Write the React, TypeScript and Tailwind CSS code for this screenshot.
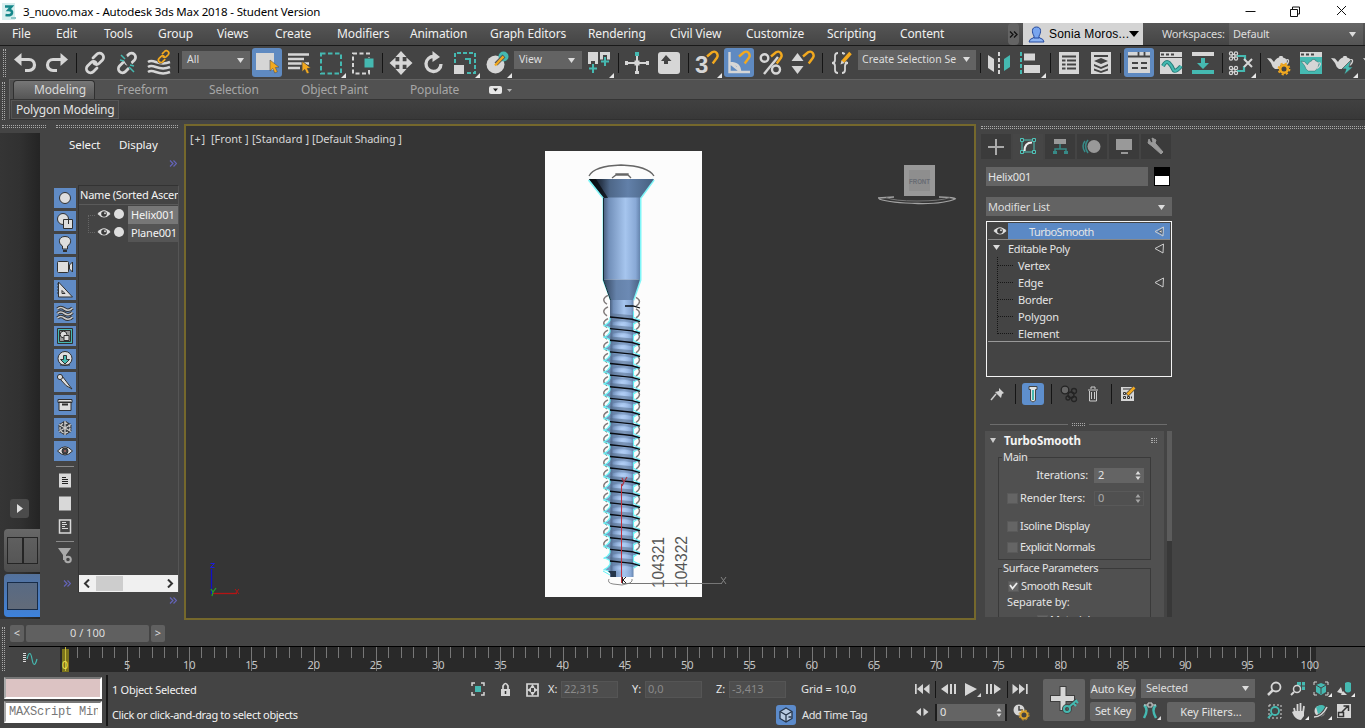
import React from "react";

type Kids = { children?: React.ReactNode };
const L = "#d6d6d6";
const T = "#45b9b1";
const Y = "#f2a91f";

const Ico = ({ s = 32, children, className = "" }: Kids & { s?: number; className?: string }) => (
  <svg width={s} height={s} viewBox={`0 0 ${s} ${s}`} fill="none" className={`block shrink-0 ${className}`}>
    {children}
  </svg>
);

const gripV = "w-[3px] shrink-0 border-x border-dotted border-[#a8a8a8]";
const gripH = "h-[3px] shrink-0 border-y border-dotted border-[#a8a8a8]";

const Fly = () => <path d="M31 26v5h-5z" fill="#e6e6e6" />;
const Sep = ({ className = "w-1.5" }: { className?: string }) => (
  <div className={`flex shrink-0 justify-center ${className}`}>
    <div className="h-5 w-px bg-[#151515]" />
  </div>
);
const Tool = ({ active, children }: Kids & { active?: boolean }) => (
  <div className="flex h-8 w-8 shrink-0 items-center justify-center">
    <div className={active ? "h-[29px] w-[30px] overflow-hidden rounded-[3px] bg-[#5f8ac1]" : "h-8 w-8"}>
      <Ico className={active ? "-ml-px -mt-0.5" : ""}>{children}</Ico>
    </div>
  </div>
);
const Arrow = ({ className = "" }: { className?: string }) => (
  <svg width="7" height="5" viewBox="0 0 7 5" className={`shrink-0 ${className}`}>
    <path d="M0 0h7L3.5 5z" fill="#dcdcdc" />
  </svg>
);
const Combo = ({ className, children }: Kids & { className: string }) => (
  <div className={`flex shrink-0 items-center justify-between overflow-hidden bg-[#636363] whitespace-nowrap text-[#dedede] ${className}`}>
    <span>{children}</span>
    <Arrow />
  </div>
);
const Magnet = ({ x, y }: { x: number; y: number }) => (
  <path d={`M${x} ${y}l5-4.200q3-1.600 4.700.6t.4 4.600l-4.400 6`} stroke={Y} strokeWidth="2.400" />
);
const Teapot = ({ x, y }: { x: number; y: number }) => (
  <g transform={`translate(${x} ${y})`}>
    <path d="M0 3l4 .5 3 3.500q2-4 5-4.500l.5-1.500h3l.5 1.500q3 .5 4 3 0 5-4.500 8.500h-7.500Q5 12 4 8z" fill={L} />
    <path d="M19 5q3-1 2.500 1.500T18 11" stroke={L} strokeWidth="1.300" />
  </g>
);
const cursor = <path d="M19 14v11l2.800-2.500 2 4.500 2.600-1.200-2-4.300 3.600-.4z" fill={Y} />;
const chain = (c: string) => (
  <g stroke={c} strokeWidth="2.800" strokeLinecap="round">
    <path d="M14 11l3.500-3.500a4 4 0 0 1 6 5.500L20 16.500q-2.500 2-5 0" />
    <path d="M18 21l-3.500 3.500a4 4 0 0 1-6-5.500L12 15.500q2.500-2 5 0" />
  </g>
);

const menus: [string, string][] = [
  ["File", "w-[44px]"], ["Edit", "w-[48px]"], ["Tools", "w-[54px]"], ["Group", "w-[59px]"], ["Views", "w-[58px]"],
  ["Create", "w-[62px]"], ["Modifiers", "w-[73px]"], ["Animation", "w-[80px]"], ["Graph Editors", "w-[98px]"],
  ["Rendering", "w-[82px]"], ["Civil View", "w-[76px]"], ["Customize", "w-[81px]"], ["Scripting", "w-[73px]"], ["Content", "w-[110px]"],
];

function TitleBar() {
  return (
    <div className="flex h-[23px] shrink-0 items-center bg-white text-[11.500px] text-black">
      <svg width="17" height="17" viewBox="0 0 17 17" className="ml-0.5">
        <rect width="13" height="17" fill="#d8eeee" />
        <path d="M3 3.500h6.500L6.500 7q4 0 3.500 3t-6.500 2" fill="none" stroke="#16878a" strokeWidth="2.600" />
        <path d="M9 15h5" stroke="#8dc8c8" strokeWidth="2" />
      </svg>
      <span className="ml-1 w-[1220px] tracking-[-0.150px]">3_nuovo.max - Autodesk 3ds Max 2018 - Student Version</span>
      <svg width="110" height="16" viewBox="0 0 110 16" fill="none" stroke="#111" className="-mt-1">
        <path d="M2.500 9.500h10M47.500 7.500h7v7h-7zM49.500 7v-2h7v7h-2M94 4l9 9M103 4l-9 9" />
      </svg>
    </div>
  );
}

function MenuBar() {
  return (
    <div className="flex h-[23px] shrink-0 items-stretch border-b border-[#1a1a1a] bg-linear-to-b from-[#565656] to-[#454545] text-[12px] text-[#f0f0f0]">
      <div className="flex w-[1008px] items-center overflow-hidden pl-3 tracking-[-0.110px] whitespace-nowrap">
        {menus.map(([m, w]) => (
          <span key={m} className={`shrink-0 leading-5 ${w}`}>{m}</span>
        ))}
      </div>
      <div className="flex w-[11px] items-center justify-center rounded-sm bg-[#646464]">
        <svg width="9" height="7" viewBox="0 0 9 7" fill="none" stroke="#111" strokeWidth="1.300"><path d="M1 .5l3 3-3 3M5 .5l3 3-3 3" /></svg>
      </div>
      <div className="ml-1 flex w-[120px] items-center bg-[#d4d4d4] text-black">
        <svg width="17" height="17" viewBox="0 0 17 17" className="ml-[5px]">
          <path d="M1 16q0-3 5-4.500h5q5 1.500 5 4.500z" fill="#8cb4f4" stroke="#24499c" />
          <path d="M8.500 1C3 1 4 7 6 10v2h5v-2c2-3 3-9-2.500-9z" fill="#78a5ef" stroke="#24499c" />
        </svg>
        <span className="ml-1 w-[80px] font-['Liberation_Sans',sans-serif] text-[12px] tracking-[0.200px] whitespace-nowrap">Sonia Moros...</span>
        <svg width="10" height="6" viewBox="0 0 10 6"><path d="M0 0h10L5 6z" fill="#000" /></svg>
      </div>
      <span className="ml-[19px] w-[67px] text-[11px] leading-[22px] tracking-[-0.200px] whitespace-nowrap text-[#dadada]">Workspaces:</span>
      <Combo className="h-[22px] w-[134px] bg-linear-to-b from-[#666] to-[#555] pt-px pr-[7px] pl-[4px] text-[11px] tracking-[-0.200px]">Default</Combo>
    </div>
  );
}

function ToolBar() {
  return (
    <div className="flex h-[33px] w-[1365px] shrink-0 items-center overflow-hidden bg-[#444] text-[10.500px]">
      <div className={`mr-[3px] ml-[3px] h-7 ${gripV}`} />
      <Tool><path d="M7 12.500h13a5.500 5.500 0 0 1 0 11h-4" stroke={L} strokeWidth="3.200" /><path d="M12.500 6v13L5 12.500z" fill={L} /></Tool>
      <Tool><path d="M25 12.500H12a5.500 5.500 0 0 0 0 11h4" stroke={L} strokeWidth="3.200" /><path d="M19.500 6v13L27 12.500z" fill={L} /></Tool>
      <Sep />
      <Tool>{chain(L)}</Tool>
      <Tool>
        {chain(L)}
        <path d="M13 9l9 14" stroke="#444" strokeWidth="5" />
        <path d="M14 12l-4-4M18 20l5 5M13 14l-4-1M19 18l4 1" stroke={T} strokeWidth="1.500" />
      </Tool>
      <Tool>
        <path d="M5 15c6-4 10 5 22 0M5 20c6-4 10 5 22 0M5 25c6-4 10 5 22 0" stroke={L} strokeWidth="2.500" />
        <g transform="translate(11 1) scale(.58)">{chain("#444")}</g>
        <g transform="translate(11 0) scale(.6)">{chain(Y)}</g>
      </Tool>
      <Sep className="w-[7px]" />
      <Combo className="mr-px -mt-[5px] h-[18px] w-[68px] pr-[6px] pl-[5px]">All</Combo>
      <Tool active><path d="M5 7h18v17H5z" fill={L} /><g stroke="#555" strokeWidth=".6">{cursor}</g></Tool>
      <Tool><path d="M5 7.500h21M5 12h16M5 16.500h21M5 21h12" stroke={L} strokeWidth="2.600" /><g stroke="#444" strokeWidth=".8">{cursor}</g></Tool>
      <Tool><path d="M6 6.500h20v20H6z" stroke={T} strokeWidth="2" strokeDasharray="4.500 2.500" /><Fly /></Tool>
      <Tool><path d="M6 6.500h16v20H6z" stroke={L} strokeWidth="2" strokeDasharray="4 2.500" /><path d="M17 11h10v10H17z" fill={T} stroke="#444" /></Tool>
      <Sep />
      <Tool>
        <path d="M16 8v16M8 16h16" stroke={L} strokeWidth="3.400" />
        <path d="M16 4l5.500 6h-11zM16 28l5.500-6h-11zM4.500 16l6-5.500v11zM27.500 16l-6-5.500v11z" fill={L} />
      </Tool>
      <Tool><path d="M17 9.500a7.500 7.500 0 1 0 7 7.500" stroke={L} strokeWidth="3.300" /><path d="M15.500 4v11l7.500-5z" fill={L} /></Tool>
      <Tool>
        <path d="M6 16V6h20v20H17" stroke={T} strokeWidth="2" strokeDasharray="4 2" />
        <path d="M16 12h5v5" stroke={T} strokeWidth="2" /><path d="M5 18h10v9H5z" fill={L} /><Fly />
      </Tool>
      <Tool>
        <circle cx="14.500" cy="17.500" r="9" fill={L} /><circle cx="22.500" cy="9.500" r="5" fill={T} />
        <path d="M15 17l8-8" stroke="#555" strokeWidth="4" /><path d="M14 18.500l8.500-9" stroke={Y} strokeWidth="2.400" /><Fly />
      </Tool>
      <Combo className="mr-px ml-px -mt-[5px] h-[18px] w-[68px] pr-[7px] pl-[5px]">View</Combo>
      <Tool>
        <path d="M5 5h10v12H5zM17 5h10v9H17z" fill={L} />
        <path d="M10 14v13M4 21h12M22 8v13M16.500 14.500h11" stroke="#444" strokeWidth="4" />
        <path d="M10 17v9M6 21.500h8M22 10v9M18 14.500h8" stroke={T} strokeWidth="2" /><Fly />
      </Tool>
      <Sep />
      <Tool><path d="M16 9v17M5 16h22" stroke={L} strokeWidth="2" /><path d="M4 14h3v4H4zM25 14h3v4h-3zM14 24h4v3h-4zM13.500 13.500h5v5h-5z" fill={L} /><path d="M14 5h4v4h-4z" fill={T} /></Tool>
      <Tool><rect x="5" y="5" width="22" height="22" rx="3" fill={L} /><path d="M13 8l5.500 6H15v3h-4v-3H8z" fill="#444" /></Tool>
      <Sep />
      <Tool>
        <text x="4" y="26" fontSize="24" fontWeight="700" fontFamily="Liberation Sans" fill={L}>3</text>
        <Magnet x={16} y={9.500} /><Fly />
      </Tool>
      <Tool active>
        <path d="M6.500 6v20H27M7 17q10 0 10 9M7 17l10 8" stroke={L} strokeWidth="2.400" /><Magnet x={16} y={10.500} />
      </Tool>
      <Tool>
        <circle cx="9.500" cy="11" r="3.800" stroke={L} strokeWidth="2.400" /><circle cx="21" cy="22.500" r="4" stroke={L} strokeWidth="2.400" />
        <path d="M23 10L9 27" stroke={L} strokeWidth="2.400" /><Magnet x={16} y={9.500} />
      </Tool>
      <Tool><path d="M10.500 6l6 8h-12zM10.500 27l6-8h-12z" fill={L} /><Magnet x={16} y={9.500} /></Tool>
      <Sep />
      <Tool>
        <path d="M13 6q-3 0-3 3v4q0 3-3 3 3 0 3 3v4q0 3 3 3M17 6q3 0 3 3v4q0 3 3 3-3 0-3 3v4q0 3-3 3" stroke={L} strokeWidth="1.800" />
        <path d="M17 14l9-9" stroke="#444" strokeWidth="6" /><path d="M17.500 15l8-9" stroke={Y} strokeWidth="3.400" /><path d="M15.500 17.500l1-4 3 2.500z" fill={L} />
      </Tool>
      <Combo className="mr-0.5 ml-px -mt-[6px] h-[20px] w-[118px] pr-[6px] pl-[4px]">Create Selection Se</Combo>
      <Sep className="w-[5px]" />
      <Tool><path d="M5 8l6 4v13l-6-4z" fill={L} /><path d="M27 8l-6 4v12l6-4z" fill={T} /><path d="M16 5v23" stroke={L} strokeWidth="2" strokeDasharray="4 2" /></Tool>
      <Tool><path d="M6 5v22" stroke={T} strokeWidth="2" strokeDasharray="4 2" /><path d="M9 6.500h11v7H9zM9 18h16v8H9z" fill={L} /><Fly /></Tool>
      <Sep />
      <Tool><path d="M6 5h20v22H6z" fill={L} /><path d="M9 9.500h14M9 13.500h3.500M14 13.500h9M9 17.500h3.500M14 17.500h9M9 21.500h3.500M14 21.500h9" stroke="#444" strokeWidth="2" /></Tool>
      <Tool><path d="M6 5h20v22H6z" fill={L} /><path d="M9 9h14" stroke="#444" strokeWidth="2" /><path d="M16 11l7 3-7 3-7-3zM9 17l7 3 7-3v2l-7 3-7-3zM9 21.500l7 2.500 7-2.500v2L16 26l-7-2.500z" fill="#444" /></Tool>
      <Sep />
      <Tool active><path d="M5 6h22v21H5z" fill={L} /><path d="M5 10.500h22M15.500 6v4M21.500 6v4M9 17h6M18 17h6M9 22h6M18 22h6" stroke="#444" strokeWidth="1.800" /></Tool>
      <Tool><path d="M5 5h22v22H5z" fill={L} /><path d="M6 7.500h3M11 7.500h3M16 7.500h3" stroke="#444" strokeWidth="2" /><path d="M5 10.500h22" stroke="#444" /><path d="M8 19q3-6 6-3t4 6 4 1 4-4" stroke="#267d79" strokeWidth="4" /><path d="M8 19q3-6 6-3t4 6 4 1 4-4" stroke={T} strokeWidth="2.200" /></Tool>
      <Tool><path d="M5 5h22v4H5z" fill={L} /><path d="M5 23h22v4H5zM14 11h4v5h4l-6 6-6-6h4z" fill={T} /></Tool>
      <Sep />
      <Tool>
        <path d="M12 9h8v4M12 24h7v-5" stroke={T} strokeWidth="2.200" />
        <path d="M19 12l8 8M27 12l-8 8" stroke={L} strokeWidth="2" />
        <g stroke={L} strokeWidth="1.200"><circle cx="6" cy="6.500" r="1.600" /><circle cx="11" cy="6.500" r="1.600" /><circle cx="8.500" cy="9" r="1.600" /><circle cx="6" cy="11.500" r="1.600" /><circle cx="11" cy="11.500" r="1.600" /><circle cx="6" cy="21" r="1.600" /><circle cx="11" cy="21" r="1.600" /><circle cx="8.500" cy="23.500" r="1.600" /><circle cx="6" cy="26" r="1.600" /><circle cx="11" cy="26" r="1.600" /></g><Fly />
      </Tool>
      <Sep />
      <Tool><Teapot x={4} y={8} /><circle cx="21" cy="22" r="5" fill="#444" /><circle cx="21" cy="22" r="3.800" stroke={Y} strokeWidth="2.600" /><circle cx="21" cy="22" r="5.600" stroke={Y} strokeWidth="1.600" strokeDasharray="2.200 2.200" /></Tool>
      <Tool><path d="M5 5h22v22H5z" fill={T} /><path d="M5 5h22v5H5z" fill={L} /><path d="M6 7.500h3M11 7.500h3M16 7.500h3" stroke="#444" strokeWidth="2" /><g transform="translate(6 11.500) scale(.9)" stroke="#2b6d6a" strokeWidth=".6"><Teapot x={0} y={0} /></g></Tool>
      <Tool><Teapot x={4} y={8} /><path d="M24 13l-9 9h4l-2 6 9-8h-4z" fill={T} stroke="#444" strokeWidth=".7" /><Fly /></Tool>
      <Tool><Teapot x={4} y={8} /></Tool>
    </div>
  );
}

function Ribbon() {
  return (
    <div className="flex h-[45px] shrink-0 bg-[#444]">
      <div className={`mt-[3px] ml-0.5 h-[38px] ${gripV}`} />
      <div className="ml-[4px] h-[40px] w-[1356px] border-t border-l border-[#626262] text-[12px]">
        <div className="flex h-5 items-center border-b border-[#353535] bg-[#515151] tracking-[-0.150px] text-[#a6a6a6]">
          <span className="ml-[3px] flex h-[19px] w-[82px] items-center rounded-t-sm border border-b-0 border-[#303030] bg-linear-to-b from-[#777] to-[#555] pl-[20px] text-[#d8d8d8]">Modeling</span>
          <span className="ml-[22px] w-[92px]">Freeform</span>
          <span className="w-[92px]">Selection</span>
          <span className="w-[109px]">Object Paint</span>
          <span className="w-[79px]">Populate</span>
          <svg width="24" height="8" viewBox="0 0 24 8"><rect width="13" height="8" rx="2" fill="#e6e6e6" /><path d="M4 2.500h5L6.500 5.500z" fill="#222" /><path d="M18 3h5l-2.500 3z" fill="#b5b5b5" /></svg>
        </div>
        <div className="h-[20px] border-b border-[#303030] bg-linear-to-b from-[#414141] to-[#383838]">
          <div className="ml-px flex h-[19px] w-[108px] items-center border border-[#555] bg-[#444] pl-1 whitespace-nowrap text-[#e2e2e2]"><span className="tracking-[-0.240px]">Polygon Modeling</span></div>
        </div>
      </div>
    </div>
  );
}

const DS = { stroke: "#303030", strokeWidth: 1, fill: "#dedede" };
const filters: React.ReactNode[] = [
  <circle cx="11" cy="10" r="5.500" {...DS} />,
  <g {...DS}><circle cx="9" cy="8" r="5.500" /><path d="M9.500 8.500h9v9h-9z" /><path d="M10 8.500h4.500v4.500" fill="none" /></g>,
  <g {...DS}><path d="M11 2.500c-7 0-7 7-2.500 9.500v3h5v-3c4.500-2.500 4.500-9.500-2.500-9.500z" /><path d="M9 17h4" strokeWidth="2" /></g>,
  <g {...DS}><rect x="3.500" y="4.500" width="11" height="11" rx="1" /><path d="M15.500 8l3-3v10l-3-3z" /></g>,
  <g {...DS}><path d="M4.500 2v15h14zM8 10.500v3h3z" /><path d="M3 4h2M3 7h2M3 10h2M3 13h2" /></g>,
  <g fill="none"><path d="M3.500 6q3-3 7 0t8-1M3.500 10.500q3-3 7 0t8-1M3.500 15q3-3 7 0t8-1" stroke="#333" strokeWidth="3.500" /><path d="M3.500 6q3-3 7 0t8-1M3.500 10.500q3-3 7 0t8-1M3.500 15q3-3 7 0t8-1" stroke="#ccc" strokeWidth="1.600" /></g>,
  <g {...DS}><path d="M3.500 2.500h15v15h-15z" fill={T} /><path d="M5.500 4.500h11v11h-11z" fill="#999" /><circle cx="9.500" cy="8.500" r="3.300" /><path d="M10 9.500h5v5h-5z" /></g>,
  <g {...DS}><circle cx="11" cy="9.500" r="7" /><path d="M9.500 6.500h3v4h3L11 15l-4.500-4.500h3zM6 16h10" fill={T} /></g>,
  <g {...DS}><path d="M8.500 4.500l9.500 12.500q-6-2-11.500-9.500z" /><circle cx="6" cy="5" r="2.600" /></g>,
  <g {...DS}><path d="M5 7h12v8.500H5zM4 4.500h14v3H4z" /><path d="M8 9.500h6" strokeWidth="2" /></g>,
  <g fill="none"><g stroke="#333" strokeWidth="3"><circle cx="11" cy="10" r="5" /><path d="M11 3v14M5 6.500l12 7M17 6.500l-12 7" /></g><g stroke="#ccc" strokeWidth="1.400"><circle cx="11" cy="10" r="5" strokeDasharray="3 1.500" /><path d="M11 3v14M5 6.500l12 7M17 6.500l-12 7" /></g></g>,
  <g {...DS}><path d="M3.500 10q7.500-8.500 15 0-7.500 8-15 0z" /><circle cx="11" cy="10" r="3" fill="#444" /><circle cx="11" cy="10" r="1" fill="#a66" stroke="none" /></g>,
];
const Eye = ({ className = "" }: { className?: string }) => (
  <svg width="14" height="10" viewBox="0 0 14 10" className={`shrink-0 ${className}`}>
    <path d="M.5 5q6.500-7.500 13 0-6.500 7-13 0z" fill="#e0e0e0" /><circle cx="7" cy="5" r="2.800" fill="#3a3a3a" /><circle cx="8" cy="4.200" r="1" fill="#ccc" />
  </svg>
);
const More = ({ className = "" }: { className?: string }) => (
  <svg width="8" height="7" viewBox="0 0 8 7" fill="none" stroke="#6464b8" strokeWidth="1.200" className={`shrink-0 ${className}`}><path d="M1 .5l3 3-3 3M4.500 .5l3 3-3 3" /></svg>
);

function LeftStrip() {
  return (
    <div className="flex w-10 shrink-0 flex-col">
      <div className={`mt-[1px] ml-0.5 w-[44px] ${gripH}`} />
      <div className="mt-[5px] flex h-[486px] flex-col bg-linear-to-r from-[#353535] via-[#313131] to-[#242424]">
        <div className="mt-[366px] ml-2.5 flex h-[19px] w-[19px] items-center justify-center rounded-[3px] bg-[#4b4b4b]">
          <svg width="6" height="9" viewBox="0 0 6 9"><path d="M0 0l6 4.500L0 9z" fill="#e0e0e0" /></svg>
        </div>
        <div className="mt-[11px] ml-1 flex h-[43px] w-9 items-center rounded-l bg-linear-to-b from-[#686868] to-[#4c4c4c] pl-[3px]">
          <div className="flex h-[27px] w-[31px] border border-[#252525] bg-linear-to-b from-[#5f5f5f] to-[#565656]"><div className="ml-[14px] w-0.5 bg-[#252525]" /></div>
        </div>
        <div className="mt-0.5 ml-1 flex h-[43px] w-9 items-center rounded-l bg-linear-to-b from-[#54719a] to-[#3d82dc] pl-[3px]">
          <div className="h-[28px] w-[31px] border border-[#182c48] bg-linear-to-b from-[#586a84] to-[#626b79]" />
        </div>
      </div>
    </div>
  );
}

function Explorer() {
  return (
    <div className="flex w-[144px] shrink-0 flex-col text-[11px] text-[#f4f4f4]">
      <div className={`mt-px ml-4 w-[122px] ${gripH}`} />
      <div className="mt-[9px] ml-[29px] flex h-4 items-center text-[11.500px] tracking-[-0.080px]">
        <span className="w-[50px]">Select</span><span>Display</span>
      </div>
      <More className="mt-[7px] ml-[129px]" />
      <div className="mt-[18px] flex h-[408px]">
        <div className="ml-[14px] flex w-[22px] flex-col items-center">
          <div className="mt-[3px] flex flex-col gap-[3px]">
            {filters.map((f, i) => (
              <div key={i} className="h-5 w-[22px] bg-[#608bc5]"><svg width="22" height="20" viewBox="0 0 22 20">{f}</svg></div>
            ))}
          </div>
          <div className="mt-[5px] h-px w-[18px] bg-[#8a8a8a]" />
          <svg width="22" height="68" viewBox="0 0 22 68" className="mt-1.5">
            <path d="M5 .5h12v14H5zM5 23.500h12v14H5z" fill="#d8d8d8" />
            <path d="M8 4.500h4M8 6.500h6M8 8.500h6M8 10.500h6" stroke="#222" />
            <path d="M5.500 47h11v13h-11z" stroke="#d8d8d8" strokeWidth="1.500" fill="none" />
            <path d="M8 49.500h4M8 51.500h5M8 53.500h3M8 55.500h6" stroke="#d8d8d8" />
          </svg>
          <div className="h-px w-[18px] bg-[#8a8a8a]" />
          <svg width="18" height="18" viewBox="0 0 18 18" className="mt-1.5"><path d="M2 0h13l-5 7v5H7V7z" fill="#aaa" /><circle cx="12" cy="11.500" r="2.800" stroke="#aaa" strokeWidth="2" fill="#444" /></svg>
          <More className="mt-[14px] ml-1" />
        </div>
        <div className="ml-[2px] flex w-[101px] flex-col border border-t-[#333] border-r-[#555] border-b-transparent border-l-[#333]">
          <div className="flex h-[19px] items-center overflow-hidden border-b border-[#5a5a5a] pt-px pl-px tracking-[-0.230px] whitespace-nowrap">Name (Sorted Ascen</div>
          <div className="mt-px ml-[9px] flex h-9">
            <div className="my-[9px] w-[8px] border border-r-0 border-dotted border-[#666]" />
            <div className="flex flex-col">
              {["Helix001", "Plane001"].map((n, i) => (
                <div key={n} className="flex h-[18px] items-center pl-[2px]">
                  <Eye className="-mt-0.5" /><div className="-mt-0.5 ml-[3px] h-[10px] w-[10px] shrink-0 rounded-full bg-[#dedede]" />
                  <span className={i ? "ml-[4px] h-[18px] w-[50px] bg-[#555] pl-[3px] leading-[17px] tracking-[-0.200px]" : "ml-[4px] h-[18px] w-[50px] bg-[#777] pl-[3px] leading-[17px] tracking-[-0.150px]"}>{n}</span>
                </div>
              ))}
            </div>
          </div>
          <div className="mt-[333px] flex h-[17px] shrink-0 items-center bg-[#f0f0f0]">
            <svg width="16" height="9" viewBox="0 0 16 9" fill="none" stroke="#333" strokeWidth="2"><path d="M10 .5l-4 4 4 4" /></svg>
            <div className="ml-px h-[15px] w-[27px] bg-[#cdcdcd]" />
            <svg width="16" height="9" viewBox="0 0 16 9" fill="none" stroke="#333" strokeWidth="2" className="ml-auto"><path d="M6 .5l4 4-4 4" /></svg>
          </div>
        </div>
      </div>
      <More className="mt-1 ml-[129px]" />
    </div>
  );
}

const turns = Array.from({ length: 22 }, (_, i) => 192.300 + i * 11.620);

function Screw() {
  return (
    <svg width="157" height="446" viewBox="545 26 157 446" className="block overflow-visible">
      <defs>
        <linearGradient id="shaft"><stop offset="0" stopColor="#4a607f" /><stop offset=".15" stopColor="#7290ba" /><stop offset=".6" stopColor="#a6c5ee" /><stop offset=".88" stopColor="#89a9d6" /><stop offset="1" stopColor="#6584ae" /></linearGradient>
        <linearGradient id="cone"><stop offset="0" stopColor="#0a0f16" /><stop offset=".2" stopColor="#2c3b50" /><stop offset=".32" stopColor="#4e6788" /><stop offset=".6" stopColor="#6280a9" /><stop offset="1" stopColor="#46607f" /></linearGradient>
        <linearGradient id="neck"><stop offset="0" stopColor="#33455f" /><stop offset=".35" stopColor="#6582aa" /><stop offset=".7" stopColor="#6c8ab4" /><stop offset="1" stopColor="#4a6283" /></linearGradient>
        <radialGradient id="glow"><stop offset="0" stopColor="#b4d0f6" /><stop offset="1" stopColor="#a0c0ec" stopOpacity="0" /></radialGradient>
      </defs>
      <path d="M545 26h157v446H545z" fill="#fcfcfc" />
      <path d="M589 51q5-10 32-11 27 1 33 11M612 53l4-3h12l3 3M616 50v-1h12v1" stroke="#666" strokeWidth="1.300" fill="none" />
      <path d="M589 54.500L604 73v82l7.500 20M653.500 54.500L640 73v82l-7 20" stroke="#7ff6f8" strokeWidth="3" fill="none" />
      <path d="M589 54h65l-14 19h-36z" fill="url(#cone)" />
      <path d="M603.500 72.500h36.500v82h-36.500z" fill="url(#shaft)" />
      <path d="M603.500 154.500h36.500l-7 21h-22z" fill="url(#neck)" />
      <path d="M603.500 73v82l7 20" stroke="#122b36" fill="none" />
      <path d="M589 54l7 0 12 19h-4z" fill="#05070a" opacity=".7" />
      <g stroke="#817b7b" strokeWidth="1.400" fill="none">
        {turns.map((y) => <path key={y} d={`M608 ${y - 22}q-8 4-1 9M636 ${y - 20}q7 4 0 9`} />)}
      </g>
      <path d="M610 175h23.500v277H610z" fill="url(#shaft)" />
      {turns.map((y) => (
        <g key={y}>
          <path d={`M610 ${y}l23 2v-4l-23-2z`} fill="#536986" opacity=".5" />
          <path d={`M610 ${y + 1}l23 2v3q-12-3-23-1z`} fill="#5f7a9f" opacity=".55" />
          <ellipse cx="622" cy={y + 7} rx="10" ry="4.500" fill="url(#glow)" />
          <path d={`M610.500 ${y + 3}q-2 4-6 5 4 1 6 3zM633 ${y + 2}h7l-4 3-3 1z`} fill="#7595be" />
          <path d={`M610 ${y}v3q-2 4-6.500 5.500 5 .5 6.500 3M633.500 ${y - 6}v6l6 3-6 4`} fill="none" stroke="#65f3f6" strokeWidth="1.100" />
          <path d={`M610 ${y - .3}l22 2.300 8 2.300`} stroke="#080c12" strokeWidth="1.400" fill="none" />
        </g>
      ))}
      <path d="M625 181h8l7 2" stroke="#080c12" strokeWidth="1.300" fill="none" />
      <path d="M600 452h43v19h-43z" fill="#fcfcfc" />
      <path d="M603 446l7 4" stroke="#65f3f6" fill="none" />
      <path d="M609 454q-2 4 4 5l9 1 8-2q3-2 2-4" stroke="#888" fill="none" />
      <path d="M616 446h-8l3 3v3h5z" fill="#26364a" />
      <g fontFamily="Liberation Sans" fontSize="17" fill="#555">
        <text transform="translate(663.500 463) rotate(-90)" textLength="51" lengthAdjust="spacingAndGlyphs">104321</text>
        <text transform="translate(686.500 463) rotate(-90)" textLength="52" lengthAdjust="spacingAndGlyphs">104322</text>
      </g>
      <path d="M621.500 458V359" stroke="#c1313e" fill="none" />
      <path d="M622 458.500h100" stroke="#767676" />
      <path d="M721 452l5 7M726 452l-5 7" stroke="#838383" />
      <path d="M622 353l2 4 3-5M624 357l-2 4" stroke="#a53a49" fill="none" strokeWidth="1.300" />
      <path d="M622.500 452v6M626 452l-3 3 3 3" stroke="#222" fill="none" />
    </svg>
  );
}

function Viewport() {
  return (
    <div className="relative flex h-[496px] w-[792px] shrink-0 border-2 border-[#75682c] bg-[#353535] text-[11px] text-[#d6d6d6]">
      <div className="mt-[5px] ml-[4px] flex h-4 w-[355px] whitespace-nowrap">
        <span className="w-[21px] tracking-[0.800px]">[+]</span><span className="w-[41px]">[Front ]</span><span className="w-[60px]">[Standard ]</span><span className="tracking-[-0.180px]">[Default Shading ]</span>
      </div>
      <div className="mt-[25px]"><Screw /></div>
      <svg width="80" height="42" viewBox="0 0 80 42" className="mt-[38px] ml-[175px]">
        <path d="M1 34l16-1M2 35q12 4 39 4.500 27 .5 38-5M62 33q10 0 16 1.500" stroke="#a2a2a2" strokeWidth="1.300" fill="none" />
        <path d="M9 33.500q8 3.500 31 3.500 24 0 33-3.500" stroke="#777" fill="none" />
        <path d="M27 1h31v31H27z" fill="#989898" /><path d="M32 6h21v21H32z" fill="#8e8e8e" />
        <text x="42.500" y="20" textAnchor="middle" fontSize="8" fontFamily="Liberation Sans" fontWeight="700" textLength="21" lengthAdjust="spacingAndGlyphs" fill="#686c73">FRONT</text>
      </svg>
      <svg width="32" height="38" viewBox="0 0 32 38" className="absolute bottom-[18px] left-[22px]" fill="none">
        <path d="M3.500 7v25" stroke="#1010c8" strokeWidth="1.300" /><path d="M4 31.500h25" stroke="#b51414" strokeWidth="1.300" /><path d="M2.500 1.500h4l-4 4h4" stroke="#1b1bdd" /><path d="M27 27l4 5M31 27l-4 5" stroke="#b21515" /><path d="M3 27l2 3 3-4M5 30l-1 4" stroke="#20a526" strokeWidth="1.200" />
      </svg>
    </div>
  );
}

const panelTabs: React.ReactNode[] = [
  <path d="M15 5v16M7 13h16" stroke="#aaa" strokeWidth="2" />,
  <g stroke="#4ec4b9"><path d="M9 6h12v12H9z" /><path d="M7.500 4.500h3v3h-3zM19.500 4.500h3v3h-3zM7.500 16.500h3v3h-3zM19.500 16.500h3v3h-3z" fill="#444" /><path d="M11.500 17q0-8.500 7.500-8.500" stroke="#eee" strokeWidth="2.200" /></g>,
  <g><path d="M9 5h12v5H9z" fill="#999" /><path d="M15 10v5M10 19v-4h11v4" stroke="#378a87" strokeWidth="1.500" /><path d="M8 17h4v3H8zM19 17h4v3h-4z" fill="#378a87" /></g>,
  <g><circle cx="17" cy="12.500" r="6.500" fill="#999" /><path d="M11 6q-5 6 0 13M8 7q-4 5 0 11" stroke="#378a87" strokeWidth="1.500" /></g>,
  <path d="M7 5h16v11H7zM12 18h7v2h-7z" fill="#999" />,
  <path d="M8 5l-1 4 4 3 9 8 2-2-8-9 1-3-4-2 1 4-2 1z" fill="#999" stroke="#999" />,
];
const Spin = () => <svg width="6" height="9" viewBox="0 0 6 9" className="shrink-0"><path d="M3 0l2.500 3.500h-5zM3 9l2.500-3.500h-5z" fill="#ddd" /></svg>;
const Tri = ({ on }: { on?: boolean }) => <svg width="11" height="11" viewBox="0 0 11 11" className="-mt-0.5 ml-auto shrink-0"><path d="M9.500 1L9 10 1 5.500z" fill="none" stroke="#ccc" />{on && <path d="M8 3.500v4L4.500 5.500z" fill="#ddd" stroke="#444" strokeWidth=".8" />}</svg>;
const Check = ({ on, className, children }: Kids & { on?: boolean; className: string }) => (
  <div className={`flex items-center ${className}`}>
    <div className="mr-[2px] flex h-[11px] w-[11px] items-center justify-center border border-[#5a5a5a] bg-[#656565]">{on && <svg width="9" height="8" viewBox="0 0 9 8"><path d="M1 3l2.500 3.500L8 1" stroke="#eee" strokeWidth="1.800" fill="none" /></svg>}</div>
    <span>{children}</span>
  </div>
);

function CommandPanel() {
  return (
    <div className="flex h-[496px] w-[386px] flex-col pl-[2px] text-[11px] text-[#e5e5e5]">
      <div className={`mt-0.5 w-full ${gripH}`} />
      <div className="mt-[5px] flex h-[26px] w-[190px] shrink-0 gap-0.5">
        {panelTabs.map((p, i) => (
          <div key={i} className={i === 1 ? "h-[26px] w-[30px] bg-[#464646]" : "h-[25px] w-[30px] bg-[#3b3b3b]"}><svg width="30" height="26" viewBox="0 0 30 26" fill="none">{p}</svg></div>
        ))}
      </div>
      <div className="mt-[7px] ml-[5px] flex h-[19px] w-[186px] shrink-0 justify-between">
        <div className="flex w-[162px] items-center bg-[#646464] pt-0.5 pl-[2px] tracking-[-0.200px]">Helix001</div>
        <div className="mr-[2px] w-4 border border-black bg-white"><div className="h-2 bg-black" /></div>
      </div>
      <Combo className="mt-[11px] ml-[5px] h-[19px] w-[186px] pt-0.5 pr-[7px] pl-[2px] tracking-[-0.200px]">Modifier List</Combo>
      <div className="mt-[5px] ml-[5px] h-[156px] w-[186px] shrink-0 border border-[#f4f4f4] p-px tracking-[-0.350px]">
        <div className="flex h-[17px] border-b border-[#888]">
          <div className="flex w-[20px] items-center justify-center"><Eye className="ml-1" /></div>
          <div className="flex flex-1 items-center bg-[#5b89c5] pt-0.5 pr-[5px] pl-[21px] tracking-[-0.550px]">TurboSmooth<Tri on /></div>
        </div>
        <div className="flex h-[17px] items-center pt-0.5 pr-[5px] pl-[5px]"><Arrow className="-mt-1" /><span className="ml-[8px]">Editable Poly</span><Tri /></div>
        <div className="flex h-[85px] border-b border-[#999]">
          <svg width="30" height="85" viewBox="0 0 30 85" fill="none"><path d="M9.500 0v77M10 8.500h16M10 25.500h16M10 42.500h16M10 59.500h16M10 76.500h16" stroke="#161616" strokeDasharray="1 1" /></svg>
          <div className="flex-1 tracking-[-0.150px]">
            {["Vertex", "Edge", "Border", "Polygon", "Element"].map((v) => (
              <div key={v} className="flex h-[17px] items-center pt-0.5 pr-[5px]">{v}{v === "Edge" && <Tri />}</div>
            ))}
          </div>
        </div>
      </div>
      <div className="mt-[5px] ml-[8px] flex h-[24px] shrink-0 items-center">
        <svg width="18" height="16" viewBox="0 0 18 16" className="shrink-0"><path d="M2 14l5-6" stroke="#ccc" strokeWidth="1.500" /><path d="M10 2l5 5-2 1-1 4-6-6 4-1z" fill="#d2d2d2" /></svg>
        <Sep className="mr-[4px] ml-[6px] w-[5px]" />
        <div className="flex h-[22px] w-[22px] items-center justify-center rounded-[3px] bg-[#5e8fcd]"><svg width="12" height="17" viewBox="0 0 12 17"><path d="M2 .5h8v3H8.500v11q-2.500 3-5 0v-11H2z" fill="#e0e4e4" stroke="#444" /><path d="M6 4v10" stroke={T} strokeWidth="2" /></svg></div>
        <Sep className="ml-[5px] w-[5px]" />
        <svg width="18" height="18" viewBox="0 0 18 18" fill="none" stroke="#242424" strokeWidth="1.300" className="ml-[6px] shrink-0"><circle cx="11" cy="10" r="3" /><circle cx="14" cy="6" r="2.500" /><circle cx="14" cy="14" r="2.500" /><circle cx="8" cy="13" r="2" /><circle cx="5" cy="5" r="3.800" fill="#666" /></svg>
        <svg width="12" height="16" viewBox="0 0 12 16" fill="none" stroke="#ccc" className="ml-[9px]"><path d="M1 4h10M4 3V1h4v2M2.500 5v10h7V5M4.500 6v7M7.500 6v7" /></svg>
        <Sep className="ml-[10px] w-[5px]" />
        <svg width="16" height="16" viewBox="0 0 16 16" className="ml-[6px]"><path d="M1 1h13v14H1z" fill="#d6d6d6" /><path d="M3 3h8M3.500 6.500h2v2h-2zM7.500 6.500h2v2h-2zM3.500 10.500h2v2h-2zM7.500 10.500h2v2h-2zM11.500 10.500v2" stroke="#333" fill="none" /><path d="M7 9l8-8" stroke="#444" strokeWidth="4" /><path d="M7.500 8.500l7-7" stroke={Y} strokeWidth="2.600" /></svg>
      </div>
      <div className="mt-[17px] ml-[9px] flex h-[3px] w-[177px] shrink-0 items-center gap-1"><div className="h-px flex-1 bg-[#6c6c6c]" /><div className={`w-[13px] ${gripH}`} /><div className="h-px flex-1 bg-[#6c6c6c]" /></div>
      <div className="mt-[5px] ml-[4px] flex h-[186px] shrink-0 overflow-hidden">
        <div className="w-[179px] bg-[#505050] tracking-[-0.350px]">
          <div className="flex h-[19px] items-center pl-[5px] text-[11.500px] font-bold tracking-[-0.050px] text-[#f4f4f4]"><svg width="6" height="5" viewBox="0 0 6 5"><path d="M0 0h6L3 5z" fill="#ccc" /></svg><span className="ml-[8px]">TurboSmooth</span><div className="mr-[7px] ml-auto flex h-[5px] w-1.5 flex-col justify-between"><div className="border-t border-dotted border-[#aaa]" /><div className="border-t border-dotted border-[#aaa]" /><div className="border-t border-dotted border-[#aaa]" /></div></div>
          <fieldset className="-mt-px ml-[13px] h-[111px] w-[153px] border border-[#3a3a3a]">
            <legend className="ml-[3px] h-[16px] px-px leading-4">Main</legend>
            <div className="mt-0.5 flex h-4 items-center pr-[6px]"><span className="mr-[6px] ml-auto tracking-[-0.100px]">Iterations:</span><div className="flex h-[15px] w-[50px] items-center justify-between bg-[#646464] pr-[3px] pl-[4px]">2<Spin /></div></div>
            <div className="mt-[7px] flex h-4 items-center pr-[6px]"><Check className="ml-[8px] tracking-[-0.150px]">Render Iters:</Check><div className="ml-auto flex h-[15px] w-[50px] items-center justify-between border border-[#606060] pr-[2px] pl-[3px] opacity-60">0<Spin /></div></div>
            <Check className="mt-[12px] ml-[8px] h-4">Isoline Display</Check>
            <Check className="mt-[5px] ml-[8px] h-4 tracking-[-0.550px]">Explicit Normals</Check>
          </fieldset>
          <fieldset className="ml-[13px] h-[80px] w-[153px] border border-[#3a3a3a] tracking-[-0.350px]">
            <legend className="ml-[3px] h-[16px] px-px leading-4">Surface Parameters</legend>
            <Check on className="ml-[9px] h-5">Smooth Result</Check>
            <div className="-mt-px ml-[8px] leading-[14px] tracking-[-0.100px]">Separate by:</div>
            <Check className="mt-[3px] ml-[38px] h-4">Materials</Check>
          </fieldset>
        </div>
        <div className="ml-[3px] h-[186px] w-[5px] bg-[#383838]"><div className="h-[110px] bg-[#5c5c5c]" /></div>
      </div>
    </div>
  );
}

function Timeline() {
  return (
    <div className="flex h-[52px] shrink-0 bg-[#444] text-[11px] text-[#ddd]">
      <div className={`mt-[7px] ml-[2px] h-[44px] ${gripV}`} />
      <div className="ml-1 flex-1">
        <div className="mt-[5px] ml-px flex h-[17px] gap-[2px]">
          <div className="flex w-[14px] items-center justify-center rounded-[2px] bg-[#606060]">&lt;</div>
          <div className="flex w-[123px] items-center justify-center rounded-[2px] bg-[#606060]">0 / 100</div>
          <div className="flex w-[14px] items-center justify-center rounded-[2px] bg-[#606060]">&gt;</div>
        </div>
        <div className="mt-[4px] flex h-[26px] border-t border-black">
          <svg width="51" height="25" viewBox="9 0 51 25" fill="none"><path d="M23 6.500h3M23 8.500h3M23 10.500h3M23 12.500h3M23 14.500h3" stroke="#ddd" /><path d="M27 12q3-11 5 0t5 0" stroke={T} strokeWidth="1.200" /></svg>
          <svg width="1256" height="25" viewBox="60 0 1256 25" className="overflow-visible bg-[#292929]">
            <path d="M62 2h7v23h-7z" fill="#7b741c" />
            {Array.from({ length: 101 }, (_, i) => <path key={i} d={`M${Math.floor(65 + i * 12.450) + 0.5} ${i % 5 ? "0v11" : "0v24"}`} stroke={i === 0 ? "#c5ba3b" : "#777"} />)}
            {Array.from({ length: 21 }, (_, i) => <text key={i} x={64.700 + i * 62.250} y="22" textAnchor="middle" fontSize="11" letterSpacing="-.2" fill={i ? "#c6c6c6" : "#eee24b"} fontFamily="Noto Sans">{i * 5}</text>)}
          </svg>
        </div>
      </div>
    </div>
  );
}

const Coord = ({ l, v }: { l: string; v: string }) => (
  <div className="flex w-[84px] items-center"><span className="w-[13px]">{l}</span><div className="flex h-[17px] w-[57px] items-center border border-[#555] bg-[#4d4d4d] pl-[2px] text-[#8a8a8a]">{v}</div></div>
);
const btn = "flex items-center justify-center rounded-[2px] bg-[#646464] whitespace-nowrap";

function StatusBar() {
  return (
    <div className="flex h-[56px] w-[1365px] shrink-0 overflow-hidden bg-[#444] text-[11px] text-[#e4e4e4]">
      <div className="ml-1 flex w-[98px] shrink-0 flex-col gap-0.5 pt-[5px]">
        <div className="h-[22px] border-2 border-t-[#777] border-r-white border-b-white border-l-[#aaa] bg-[#dcc3c3]" />
        <div className="h-[22px] overflow-hidden border-2 border-t-[#777] border-r-white border-b-white border-l-[#aaa] bg-white pr-0.5 pl-[3px]">
          <div className="overflow-hidden font-['Liberation_Mono',monospace] text-[12px] leading-[18px] tracking-[-0.200px] whitespace-nowrap text-[#777]">MAXScript Mini</div>
        </div>
      </div>
      <div className="mt-[3px] ml-[4px] h-[51px] w-0.5 bg-[#171717]" />
      <div className="ml-[4px] flex w-[358px] flex-col text-[#f2f2f2]">
        <span className="mt-[10px] h-4 leading-4 tracking-[-0.280px]">1 Object Selected</span><span className="mt-[9px] h-4 leading-4 tracking-[-0.340px]">Click or click-and-drag to select objects</span>
      </div>
      <div className="flex w-[442px] flex-col">
        <div className="mt-[8px] flex h-[19px] items-center">
          <svg width="78" height="18" viewBox="0 0 78 18" fill="none"><path d="M5 5h6v6H5z" fill={T} /><path d="M2 5V2h3M11 2h3v3M14 11v3h-3M5 14H2v-3" stroke={L} strokeWidth="1.500" /><path d="M31 8h9v7h-9z" fill={L} /><path d="M33 8V5q2.500-5 5 0v3" stroke={L} strokeWidth="1.700" /><path d="M35.500 10v3" stroke="#333" strokeWidth="1.500" /><path d="M57 3h11v12H57z" stroke={L} strokeWidth="1.700" /><path d="M62.500 3l2.500 4h-5zM62.500 15l2.500-4h-5zM57 9l4-2.500v5zM68 9l-4-2.500v5z" fill={L} /></svg>
          <Coord l="X:" v="22,315" /><Coord l="Y:" v="0,0" /><Coord l="Z:" v="-3,413" />
          <span className="ml-px tracking-[-0.100px] whitespace-nowrap">Grid = 10,0</span>
        </div>
        <div className="mt-[6px] ml-[306px] flex h-5 items-center tracking-[-0.400px]"><div className="h-5 w-5 rounded-[3px] bg-[#5c8bcb]"><svg width="20" height="20" viewBox="0 0 20 20" fill="none" stroke="#27364a" strokeWidth="1.300"><path d="M10 3l6 3.500v7L10 17l-6-3.500v-7z" fill="#b9cbe2" /><path d="M4 6.500l6 3.500 6-3.500M10 10v7M12.500 12h3" /></svg></div><span className="ml-[6px]">Add Time Tag</span></div>
      </div>
      <div className="mt-[7px] flex w-[131px] shrink-0 flex-col">
        <svg width="120" height="20" viewBox="0 0 120 20" fill={L}>
          <path d="M3 5h1.700v10H3zM11 5v10l-6-5zM17.500 5v10l-6-5zM36 5v10l-7-5zM38 5h2v10h-2zM42 5h2v10h-2zM53 4l12 6-12 7zM69 14v4h-4zM74 5h2v10h-2zM78 5h2v10h-2zM82 5l7 5-7 5zM100.500 5l6 5-6 5zM107 5l6 5-6 5zM114 5h1.700v10h-1.700z" />
          <path d="M23.500 2v17M95.500 2v17" stroke="#151515" />
        </svg>
        <div className="mt-[4px] flex h-[18px] items-center">
          <svg width="23" height="12" viewBox="0 0 23 12" className="-mt-px"><path d="M9 2v8L4 6zM11.500 2v8l5-4z" fill={L} /></svg>
          <div className="mr-[6px] flex h-[17px] w-[72px] items-center justify-between border-x-2 border-[#1d1d1d] bg-[#646464] pr-[3px] pl-[3px]">0<Spin /></div>
          <svg width="17" height="17" viewBox="0 0 17 17"><circle cx="6" cy="6" r="5.500" fill={L} /><path d="M6 2v4h4" stroke="#444" strokeWidth="1.500" fill="none" /><circle cx="11" cy="11" r="3.500" fill="#444" stroke="#dba12c" strokeWidth="2" /><circle cx="11" cy="11" r="5" stroke="#dba12c" strokeDasharray="2 2" fill="none" /></svg>
        </div>
      </div>
      <div className={`mt-[7px] h-[42px] w-[42px] shrink-0 ${btn}`}>
        <svg width="42" height="42" viewBox="0 0 42 42" fill="none"><path d="M20 7v25M7 19.500h25" stroke="#3d3d3d" strokeWidth="7" /><path d="M20 8v23M8 19.500h23" stroke={L} strokeWidth="5" /><circle cx="24" cy="30" r="3" stroke="#444" strokeWidth="4" /><path d="M26 28l8-7" stroke="#444" strokeWidth="4" /><circle cx="24" cy="30" r="3" stroke={T} strokeWidth="2" /><path d="M26 28l8-7M30 24l3 3M33 22l2 2" stroke={T} strokeWidth="2" /></svg>
      </div>
      <div className="mt-[7px] ml-[5px] flex w-[46px] shrink-0 flex-col gap-[3px] tracking-[-0.180px]"><div className={`h-5 ${btn}`}>Auto Key</div><div className={`h-[19px] ${btn}`}>Set Key</div></div>
      <div className="mt-[7px] ml-[5px] flex w-[114px] shrink-0 flex-col">
        <Combo className="h-[19px] w-[114px] pr-[6px] pl-[5px] tracking-[-0.200px]">Selected</Combo>
        <div className="mt-[4px] flex h-5"><svg width="26" height="20" viewBox="0 0 26 20" fill="none"><path d="M3 3q5 4 0 13M15 3q-5 4 0 13" stroke={T} strokeWidth="2.500" /><path d="M3 3h12" stroke={L} /><path d="M7 1h4v4H7z" stroke={L} fill="#444" /><path d="M20 14v4h-4z" fill={L} /></svg><div className={`h-5 w-[88px] ${btn}`}>Key Filters...</div></div>
      </div>
      <svg width="94" height="48" viewBox="1264 677 94 48" fill="none" className="mt-[5px] ml-[9px] shrink-0">
        <g stroke={L} strokeWidth="1.800"><circle cx="1276" cy="687" r="4.500" /><path d="M1273 690l-5 5" strokeWidth="2.500" /></g>
        <path d="M1297 682h8v8h-8z" fill={T} /><path d="M1301.500 682v8M1298 686h7" stroke="#444" /><circle cx="1297" cy="689" r="3.500" fill="#444" stroke={L} strokeWidth="1.500" /><path d="M1294 692l-3 3" stroke={L} strokeWidth="2" />
        <path d="M1321 683l5 2v7l-5 3-5-3v-7z" fill={T} /><path d="M1316 685l5 3 5-3M1321 688v6" stroke="#444" /><path d="M1314 685v-3h3M1325 682h3v3M1314 692v3h3M1325 695h3v-3" stroke={L} />
        <path d="M1345 683q3-2 6 0v8q-3 3-6 0z" fill={T} /><path d="M1341 687l-4 5 6 2zM1343 691l-2 4h6z" fill={L} />
        <path d="M1269 705h12v13h-12z" stroke={L} strokeDasharray="2 2" /><circle cx="1275" cy="711" r="4" stroke={T} strokeWidth="1.800" /><path d="M1272 714l-4 4" stroke={T} strokeWidth="2" />
        <path d="M1295 712l-1-4M1297.500 712v-8M1300.500 712v-9M1303 713l1-7" stroke={L} strokeWidth="1.800" /><path d="M1294 711h10v5l-3 4q-4 0-7-4l-2-4z" fill={L} />
        <circle cx="1320" cy="711" r="5.500" fill={L} /><path d="M1316 707q8-5 10 2l-8 5z" fill={T} /><path d="M1314 717q8 0 13-10" stroke="#444" strokeWidth="3.500" /><path d="M1314 717q8 0 13-10" stroke={L} strokeWidth="1.600" />
        <path d="M1337 704h14v14h-14z" fill={L} /><path d="M1338.500 712.500h5v4h-5zM1342 712l6-6M1343.500 706h5v5" stroke="#333" strokeWidth="1.500" />
        <path d="M1332 693v4h-4zM1355 693v4h-4zM1309 716v4h-4zM1332 716v4h-4z" fill="#eee" />
      </svg>
    </div>
  );
}

export default function App() {
  return (
    <div className="flex h-[728px] w-[1365px] flex-col overflow-hidden bg-[#444] font-['Noto_Sans','Open_Sans',sans-serif]">
      <TitleBar />
      <MenuBar />
      <ToolBar />
      <Ribbon />
      <div className="flex h-[496px] shrink-0">
        <LeftStrip />
        <Explorer />
        <Viewport />
        <div className="w-[3px] shrink-0" />
        <CommandPanel />
      </div>
      <Timeline />
      <StatusBar />
    </div>
  );
}
